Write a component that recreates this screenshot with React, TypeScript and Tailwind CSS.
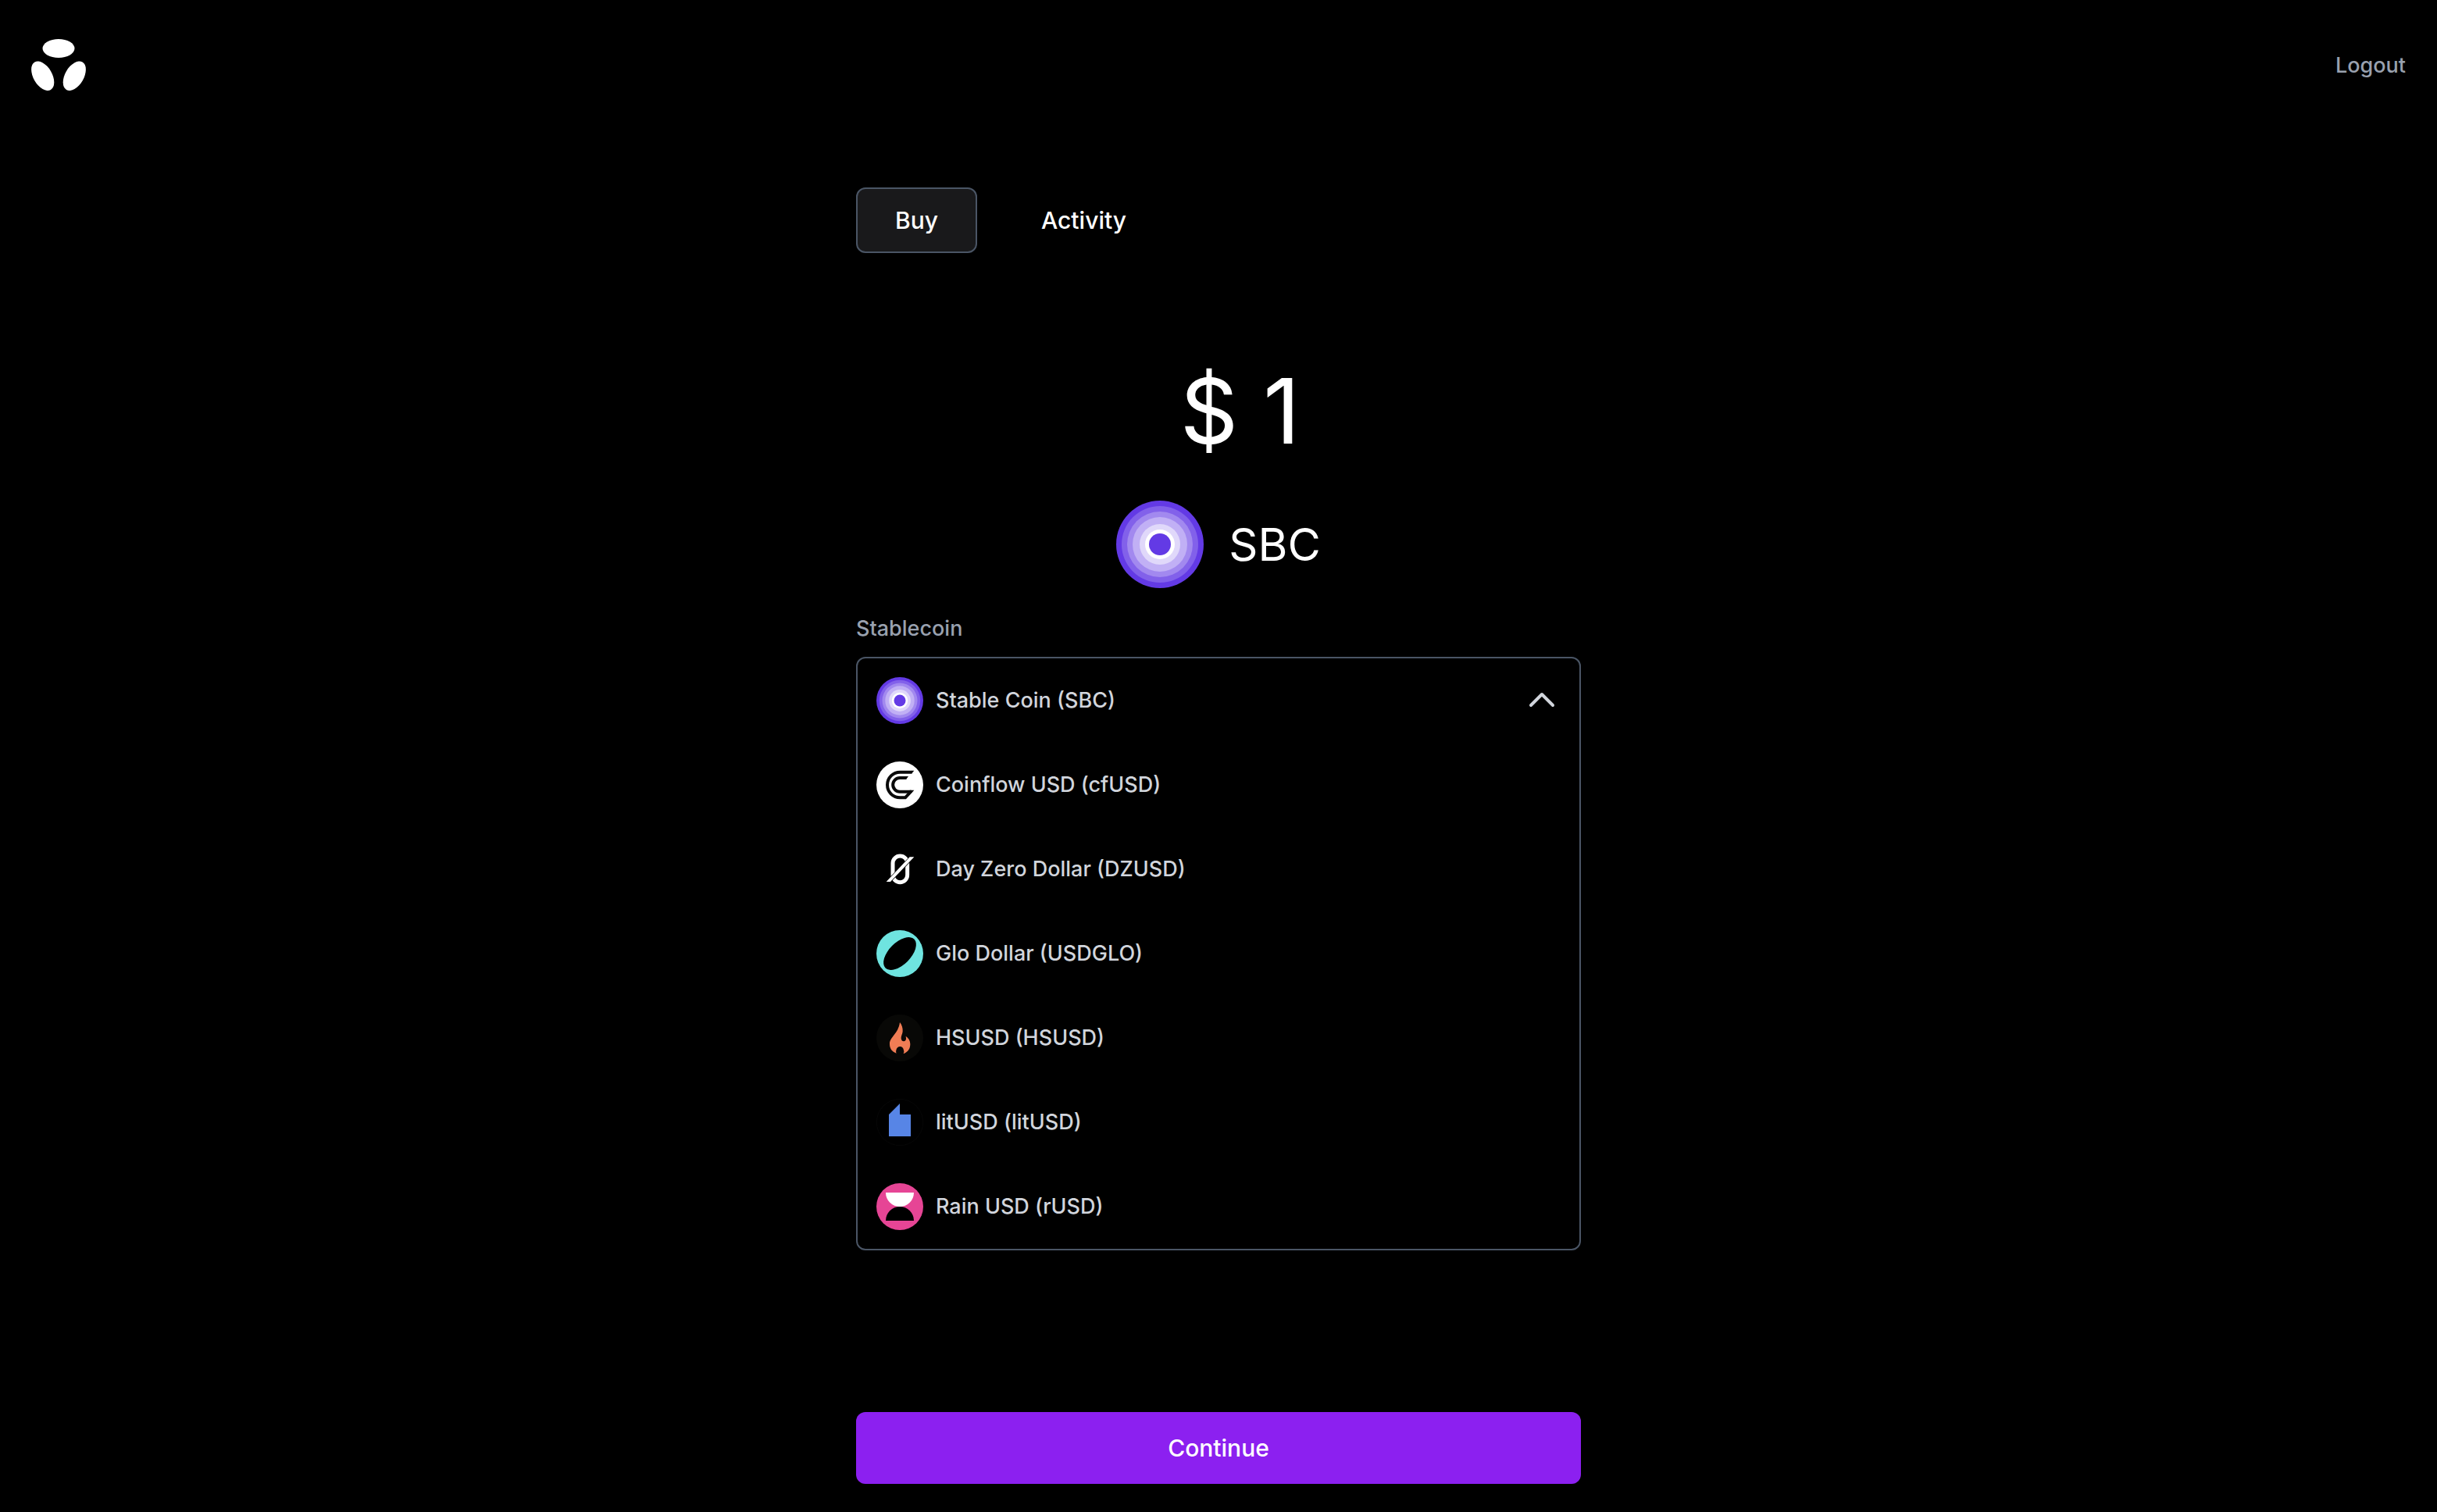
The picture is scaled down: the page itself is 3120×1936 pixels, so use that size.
import { useState, type ReactNode } from "react";

function SbcIcon({ className }: { className: string }) {
  return (
    <svg viewBox="0 0 112 112" className={className} aria-hidden="true">
      <circle cx="56" cy="56" r="56" fill="#633ae5" />
      <circle cx="56" cy="56" r="49" fill="#8261ea" />
      <circle cx="56" cy="56" r="42" fill="#a289ef" />
      <circle cx="56" cy="56" r="35" fill="#c1b0f5" />
      <circle cx="56" cy="56" r="26" fill="#e0d8fa" />
      <circle cx="56" cy="56" r="19" fill="#ffffff" />
      <circle cx="56" cy="56" r="14" fill="#633ae5" />
    </svg>
  );
}

function CoinflowIcon() {
  return (
    <svg viewBox="0 0 180 180" className="size-[60px] shrink-0" aria-hidden="true">
      <circle cx="90" cy="90" r="90" fill="#fff" />
      <g fill="none" stroke="#0a0a0a" strokeWidth="12">
        <path d="M136 41H91a49 49 0 0 0 0 98h20l23-25" />
        <path d="M115 63H90a26.500 26.500 0 0 0 0 53h44" />
      </g>
      <path d="M135 35h10l-10 12zM114 57h9l-9 12zM128 110h17l-9 11z" fill="#0a0a0a" />
    </svg>
  );
}

function DayZeroIcon() {
  return (
    <svg viewBox="0 0 180 180" className="size-[60px] shrink-0" aria-hidden="true">
      <rect x="63" y="39" width="56" height="101" rx="28" fill="none" stroke="#fff" strokeWidth="15" />
      <path d="M38 138h16l91-95h-17z" fill="#fff" stroke="#000" strokeWidth="4" />
      <path d="M38 138h16l91-95h-17z" fill="#fff" />
    </svg>
  );
}

function GloIcon() {
  return (
    <svg viewBox="0 0 180 180" className="size-[60px] shrink-0" aria-hidden="true">
      <circle cx="90" cy="90" r="90" fill="#6fe4e0" />
      <ellipse cx="90" cy="90" rx="78" ry="42" fill="#000" transform="rotate(-45 90 90)" />
    </svg>
  );
}

function HsusdIcon() {
  return (
    <svg viewBox="0 0 180 180" className="size-[60px] shrink-0" aria-hidden="true">
      <circle cx="90" cy="90" r="90" fill="#080806" />
      <path
        d="M90 30c8 10 12 22 11 35-1 9-6 16-6 25 0 8 4 13 10 13s10-5 9-12l-1-8c10 7 17 17 17 30 0 17-7 29-24 37-3 0-2 0-2-1 3-4 2-8 1-12-1-8-7-14-14-14s-14 6-15 14c-1 4-1 8 1 12-17-7-26-18-26-36 0-27 33-38 39-83z"
        fill="#f07d55"
      />
    </svg>
  );
}

function LitIcon() {
  return (
    <svg viewBox="0 0 180 180" className="size-[60px] shrink-0" aria-hidden="true">
      <circle cx="90" cy="90" r="89" fill="#000" stroke="#0a0a0a" strokeWidth="2" />
      <path d="M48 60L90 18v42h42v84H48z" fill="#5785e6" />
    </svg>
  );
}

function RainIcon() {
  return (
    <svg viewBox="0 0 180 180" className="size-[60px] shrink-0" aria-hidden="true">
      <circle cx="90" cy="90" r="90" fill="#e64595" />
      <path d="M36 36h108a54 54 0 0 1-108 0z" fill="#fff" />
      <path d="M36 144a54 54 0 0 1 108 0z" fill="#000" />
    </svg>
  );
}

type Coin = { id: string; label: string; icon: ReactNode };

const coins: Coin[] = [
  { id: "SBC", label: "Stable Coin (SBC)", icon: <SbcIcon className="size-[60px] shrink-0" /> },
  { id: "cfUSD", label: "Coinflow USD (cfUSD)", icon: <CoinflowIcon /> },
  { id: "DZUSD", label: "Day Zero Dollar (DZUSD)", icon: <DayZeroIcon /> },
  { id: "USDGLO", label: "Glo Dollar (USDGLO)", icon: <GloIcon /> },
  { id: "HSUSD", label: "HSUSD (HSUSD)", icon: <HsusdIcon /> },
  { id: "litUSD", label: "litUSD (litUSD)", icon: <LitIcon /> },
  { id: "rUSD", label: "Rain USD (rUSD)", icon: <RainIcon /> },
];

function Logo() {
  return (
    <svg viewBox="0 0 70 68" className="h-[68px] w-[70px]" fill="#fff" role="img" aria-label="Home">
      <ellipse cx="35" cy="12" rx="20.5" ry="12" />
      <ellipse cx="14.7" cy="47.2" rx="20.5" ry="12" transform="rotate(60 14.7 47.2)" />
      <ellipse cx="55.3" cy="47.2" rx="20.5" ry="12" transform="rotate(-60 55.3 47.2)" />
    </svg>
  );
}

export default function App() {
  const [open, setOpen] = useState(true);
  const [amount, setAmount] = useState("1");
  const [selected, ...others] = coins;

  return (
    <div className="flex min-h-screen flex-col bg-black font-['Inter',sans-serif] text-white">
      <header className="flex h-[168px] items-center justify-between px-10">
        <a href="#home">
          <Logo />
        </a>
        <button type="button" className="text-[27px] leading-10 font-medium text-gray-400">
          Logout
        </button>
      </header>

      <main className="mx-auto flex w-full max-w-[928px] grow flex-col pt-[72px] pb-9">
        <nav className="flex gap-8 text-[30px] leading-[48px] font-medium">
          <button type="button" className="rounded-xl border-2 border-gray-600 bg-[#19191b] px-12 py-4">
            Buy
          </button>
          <button type="button" className="rounded-xl border-2 border-transparent px-12 py-4">
            Activity
          </button>
        </nav>

        <label className="mt-[130px] flex items-center justify-center gap-8 pl-[88px] text-[116px] leading-[144px]">
          <span>$</span>
          <input
            aria-label="Amount in dollars"
            inputMode="decimal"
            value={amount}
            onChange={(e) => setAmount(e.target.value)}
            className="h-[144px] w-20 bg-transparent outline-none"
          />
        </label>

        <div className="mt-[43px] flex h-28 items-center justify-center gap-8 text-[58px] leading-[72px]">
          <SbcIcon className="size-28" />
          <span>SBC</span>
        </div>

        <span id="coin-label" className="mt-8 text-[27px] leading-10 font-medium text-gray-400">
          Stablecoin
        </span>
        <div className="mt-4 rounded-xl border-2 border-gray-600 text-[27px] leading-10 font-medium text-gray-300">
          <button
            type="button"
            aria-labelledby="coin-label"
            aria-expanded={open}
            onClick={() => setOpen(!open)}
            className="flex w-full items-center gap-4 px-6 py-6 text-left"
          >
            {selected.icon}
            <span className="grow">{selected.label}</span>
            <svg viewBox="0 0 48 48" className="size-12" fill="none" aria-hidden="true">
              <path d="M10 30L24 16L38 30" stroke="currentColor" strokeWidth="4" strokeLinecap="round" strokeLinejoin="round" />
            </svg>
          </button>
          {open && (
            <ul>
              {others.map((coin) => (
                <li key={coin.id}>
                  <button type="button" className="flex w-full items-center gap-4 px-6 py-6 text-left">
                    {coin.icon}
                    <span>{coin.label}</span>
                  </button>
                </li>
              ))}
            </ul>
          )}
        </div>

        <button
          type="button"
          className="mt-auto rounded-xl bg-[#8c20f0] py-[22px] text-[30px] leading-[48px] font-medium"
        >
          Continue
        </button>
      </main>
    </div>
  );
}
